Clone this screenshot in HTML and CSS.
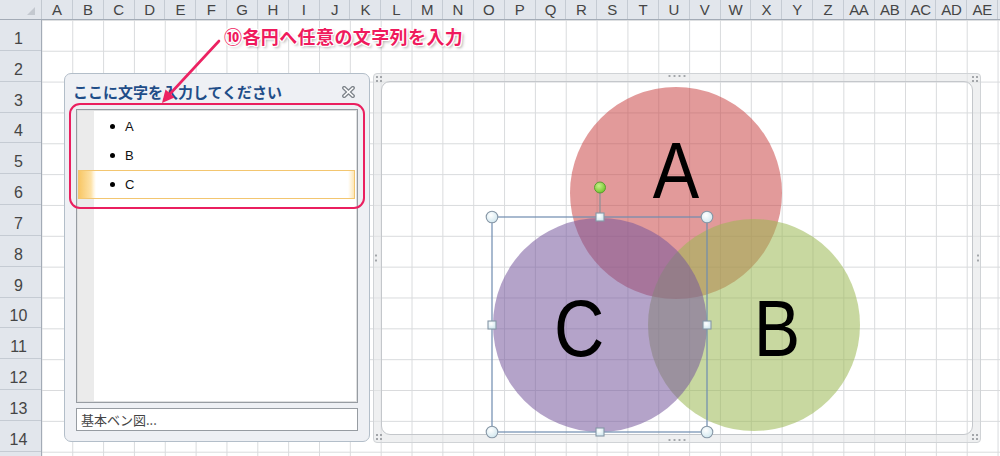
FILE: index.html
```html
<!DOCTYPE html>
<html lang="ja">
<head>
<meta charset="utf-8">
<title>SmartArt Venn</title>
<link rel="stylesheet" href="styles.css">
</head>
<body>
<div class="sheet">
  <div class="colhead">
    <div class="corner"><div class="tri"></div></div>
    <div class="ch">A</div><div class="ch">B</div><div class="ch">C</div><div class="ch">D</div><div class="ch">E</div><div class="ch">F</div><div class="ch">G</div><div class="ch">H</div><div class="ch">I</div><div class="ch">J</div><div class="ch">K</div><div class="ch">L</div><div class="ch">M</div><div class="ch">N</div><div class="ch">O</div><div class="ch">P</div><div class="ch">Q</div><div class="ch">R</div><div class="ch">S</div><div class="ch">T</div><div class="ch">U</div><div class="ch">V</div><div class="ch">W</div><div class="ch">X</div><div class="ch">Y</div><div class="ch">Z</div><div class="ch">AA</div><div class="ch">AB</div><div class="ch">AC</div><div class="ch">AD</div><div class="ch">AE</div>
  </div>
  <div class="main">
    <div class="rowhead">
      <div class="rh">1</div><div class="rh">2</div><div class="rh">3</div><div class="rh">4</div><div class="rh">5</div><div class="rh">6</div><div class="rh">7</div><div class="rh">8</div><div class="rh">9</div><div class="rh">10</div><div class="rh">11</div><div class="rh">12</div><div class="rh">13</div><div class="rh">14</div>
    </div>
    <div class="cells grid"></div>
  </div>

  <div class="pane">
    <div class="pane-title">
      <span class="title-text">ここに文字を入力してください</span>
      <svg class="close" width="13" height="12" viewBox="0 0 13 12"><path d="M2.2 2 L10.8 10 M10.8 2 L2.2 10" stroke="#7f858c" stroke-width="4.2" stroke-linecap="round"/><path d="M2.2 2 L10.8 10 M10.8 2 L2.2 10" stroke="#ffffff" stroke-width="1.6" stroke-linecap="round"/></svg>
    </div>
    <div class="list">
      <div class="item"><span class="dot"></span><span>A</span></div>
      <div class="item"><span class="dot"></span><span>B</span></div>
      <div class="item sel"><span class="dot"></span><span>C</span></div>
    </div>
    <div class="footer">基本ベン図...</div>
  </div>

  <div class="callout"></div>

  <div class="frame">
    <div class="frame-inner grid"></div>
    <span class="grip gh gtop"></span>
    <span class="grip gh gbot"></span>
    <span class="grip gv gleft"></span>
    <span class="grip gv gright"></span>
    <span class="grip gc gtl"></span>
    <span class="grip gc gtr"></span>
    <span class="grip gc gbr"></span>
    <span class="grip gc gbl"></span>
  </div>

  <svg class="art" width="1000" height="456" viewBox="0 0 1000 456">
    <defs>
      <radialGradient id="hg" cx="40%" cy="35%" r="70%">
        <stop offset="0" stop-color="#ffffff"/>
        <stop offset="1" stop-color="#cfe6ee"/>
      </radialGradient>
      <radialGradient id="gg" cx="40%" cy="35%" r="70%">
        <stop offset="0" stop-color="#c6f08a"/>
        <stop offset="1" stop-color="#6cc226"/>
      </radialGradient>
    </defs>
    <circle cx="676" cy="193" r="106" fill="#ca4747" fill-opacity="0.55"/>
    <circle cx="754" cy="325" r="106" fill="#9bb852" fill-opacity="0.55"/>
    <circle cx="600" cy="325" r="107" fill="#77589d" fill-opacity="0.55"/>
    <g font-family="Liberation Sans, Arial, sans-serif" font-size="80" fill="#000">
      <text transform="translate(676 198) scale(0.87 1)" text-anchor="middle">A</text>
      <text transform="translate(579 356) scale(0.87 1)" text-anchor="middle">C</text>
      <text transform="translate(777 356) scale(0.87 1)" text-anchor="middle">B</text>
    </g>
    <rect x="492" y="217" width="215" height="215" fill="none" stroke="#6f8cb0" stroke-width="1.2"/>
    <line x1="600" y1="193" x2="600" y2="213" stroke="#8a9097" stroke-width="1.2"/>
    <circle cx="600" cy="187.5" r="5.5" fill="url(#gg)" stroke="#5e9a36" stroke-width="1"/>
    <g fill="url(#hg)" stroke="#8797a6" stroke-width="1.1">
      <circle cx="492" cy="217" r="5.8"/>
      <circle cx="707" cy="217" r="5.8"/>
      <circle cx="492" cy="432" r="5.8"/>
      <circle cx="707" cy="432" r="5.8"/>
      <rect x="596" y="213" width="8" height="8"/>
      <rect x="596" y="428" width="8" height="8"/>
      <rect x="488" y="321" width="8" height="8"/>
      <rect x="703" y="321" width="8" height="8"/>
    </g>
    <line x1="219" y1="41" x2="169" y2="95" stroke="#ec2262" stroke-width="2.6" stroke-linecap="round"/>
    <polygon points="162,103 174.5,97.5 165.5,89.5" fill="#ec2262"/>
  </svg>

  <div class="note">⑩各円へ任意の文字列を入力</div>
</div>
</body>
</html>
```
FILE: styles.css
```css
html, body {
  margin: 0;
  padding: 0;
  background: #ffffff;
}

.sheet {
  position: relative;
  width: 1000px;
  height: 456px;
  overflow: hidden;
  background: #ffffff;
  font-family: "Liberation Sans", Arial, sans-serif;
}

.grid {
  background-color: #ffffff;
  background-image:
    linear-gradient(to right, #d9dbdd 1px, transparent 1px),
    linear-gradient(to bottom, #d9dbdd 1px, transparent 1px);
  background-size: 30.85px 30.85px;
  background-position: 41.4px 19.9px;
  background-attachment: fixed;
}

/* column header */
.colhead {
  display: grid;
  grid-template-columns: 42px repeat(31, 30.85px);
  height: 20px;
  box-sizing: border-box;
  background: #e2e6ec;
  border-bottom: 1px solid #a3abb6;
}

.corner {
  display: flex;
  align-items: flex-end;
  justify-content: flex-end;
  padding: 0 6px 4px 0;
  border-right: 1px solid #c2c8d0;
}

.tri {
  width: 0;
  height: 0;
  border-left: 8px solid transparent;
  border-bottom: 8px solid #c3c8cf;
}

.ch {
  display: flex;
  align-items: center;
  justify-content: center;
  border-right: 1px solid #c5cbd3;
  font-size: 15px;
  color: #454545;
  white-space: nowrap;
  letter-spacing: -0.3px;
}

/* rows */
.main {
  display: flex;
  height: 436px;
}

.rowhead {
  width: 42px;
  flex: none;
  box-sizing: border-box;
  background: #e2e6ec;
  border-right: 1px solid #a3abb6;
}

.rh {
  height: 30.85px;
  box-sizing: border-box;
  border-bottom: 1px solid #c5cbd3;
  display: flex;
  align-items: flex-end;
  justify-content: center;
  padding: 0 4px 2px 0;
  font-size: 16px;
  color: #454545;
}

.cells {
  flex: 1;
}

/* text pane */
.pane {
  position: absolute;
  left: 64px;
  top: 73px;
  width: 306px;
  height: 369px;
  box-sizing: border-box;
  border: 1px solid #b3bec9;
  border-radius: 7px;
  background: #eef0f4;
  display: flex;
  flex-direction: column;
}

.pane-title {
  height: 35px;
  display: flex;
  align-items: center;
  justify-content: space-between;
  padding: 0 14px 0 8px;
}

.title-text {
  font-family: "Noto Sans CJK JP", "Liberation Sans", sans-serif;
  font-weight: bold;
  font-size: 15px;
  color: #1f4d88;
}

.close {
  display: block;
}

.list {
  margin: 0 11px;
  height: 294px;
  box-sizing: border-box;
  border: 1px solid #979ca2;
  box-shadow: inset 0 0 0 1px #dedfe0;
  background: linear-gradient(to right, #ebebeb 0, #ebebeb 17px, #ffffff 17px);
  padding-top: 2px;
  display: flex;
  flex-direction: column;
}

.item {
  height: 29px;
  box-sizing: border-box;
  margin: 0 2px 0 1px;
  display: flex;
  align-items: center;
  padding-left: 32px;
  gap: 10px;
  font-size: 13px;
  color: #111111;
}

.item.sel {
  border: 1px solid #f3c670;
  padding-left: 31px;
  background: linear-gradient(to right, #f8c766 0, #fde2a8 12px, #fff6e2 15px, #ffffff 17px, #ffffff calc(100% - 6px), #fde6b6 100%);
}

.dot {
  width: 5px;
  height: 5px;
  border-radius: 50%;
  background: #000000;
}

.footer {
  margin: 5px 11px 0;
  height: 23px;
  box-sizing: border-box;
  border: 1px solid #979ca2;
  background: #ffffff;
  display: flex;
  align-items: center;
  padding-left: 4px;
  font-family: "Noto Sans CJK JP", "Liberation Sans", sans-serif;
  font-size: 13px;
  color: #444444;
}

/* pink highlight */
.callout {
  position: absolute;
  left: 69px;
  top: 103px;
  width: 296px;
  height: 106px;
  box-sizing: border-box;
  border: 2.5px solid #ea1f5f;
  border-radius: 11px;
}

/* SmartArt frame */
.frame {
  position: absolute;
  left: 373px;
  top: 73px;
  width: 608px;
  height: 370px;
  box-sizing: border-box;
  border: 1px solid #d0d3d6;
  border-radius: 4px;
  background: rgba(229, 230, 232, 0.6);
}

.frame-inner {
  position: absolute;
  inset: 7px;
  border: 1px solid #c4c7cb;
  border-radius: 9px;
}

.grip {
  position: absolute;
  background-image: radial-gradient(circle, #a3a6aa 0.9px, transparent 1.3px);
}

.gh {
  width: 20px;
  height: 4px;
  left: 293px;
  background-size: 5px 4px;
}

.gtop { top: 0; }
.gbot { bottom: 0; }

.gv {
  width: 4px;
  height: 10px;
  top: 179px;
  background-size: 4px 5px;
}

.gleft { left: 0; }
.gright { right: 0; }

.gc {
  width: 8px;
  height: 8px;
  background-size: 4px 4px;
}

.gtl { left: 1px; top: 1px; }
.gtr { right: 1px; top: 1px; }
.gbr { right: 1px; bottom: 1px; }
.gbl { left: 1px; bottom: 1px; }

.art {
  position: absolute;
  left: 0;
  top: 0;
  pointer-events: none;
}

/* annotation */
.note {
  position: absolute;
  left: 224px;
  top: 23px;
  line-height: 26px;
  font-family: "Noto Sans CJK JP", "Liberation Sans", sans-serif;
  font-weight: bold;
  font-size: 18px;
  letter-spacing: 0.4px;
  color: #ef1a5d;
  white-space: nowrap;
  text-shadow:
    1px 0 0 #fff, -1px 0 0 #fff, 0 1px 0 #fff, 0 -1px 0 #fff,
    1px 1px 0 #fff, -1px -1px 0 #fff, 1px -1px 0 #fff, -1px 1px 0 #fff,
    2px 2px 3px rgba(0, 0, 0, 0.35);
}
```
